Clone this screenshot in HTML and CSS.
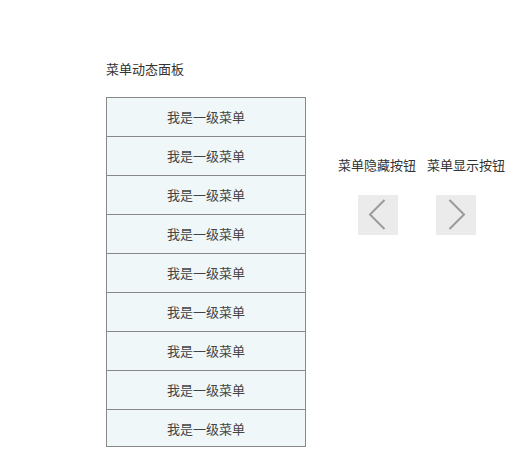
FILE: index.html
```html
<!DOCTYPE html>
<html lang="zh">
<head>
<meta charset="utf-8">
<link rel="stylesheet" href="styles.css">
</head>
<body>
<div class="page">
  <div class="panel">
    <div class="title">菜单动态面板</div>
    <ul class="menu">
      <li>我是一级菜单</li>
      <li>我是一级菜单</li>
      <li>我是一级菜单</li>
      <li>我是一级菜单</li>
      <li>我是一级菜单</li>
      <li>我是一级菜单</li>
      <li>我是一级菜单</li>
      <li>我是一级菜单</li>
      <li>我是一级菜单</li>
    </ul>
  </div>
  <div class="controls">
    <div class="labels">
      <span>菜单隐藏按钮</span>
      <span>菜单显示按钮</span>
    </div>
    <div class="buttons">
      <div class="btn"><svg width="40" height="40" viewBox="0 0 40 40"><path d="M26.5 5 L12 19.5 L26.5 34" fill="none" stroke="#9a9a9a" stroke-width="2"/></svg></div>
      <div class="btn"><svg width="40" height="40" viewBox="0 0 40 40"><path d="M13.5 5 L28 19.5 L13.5 34" fill="none" stroke="#9a9a9a" stroke-width="2"/></svg></div>
    </div>
  </div>
</div>
</body>
</html>
```
FILE: styles.css
```css
body {
  margin: 0;
  font-family: "Noto Sans CJK SC", "Noto Sans", sans-serif;
  font-size: 13px;
  color: #333;
  background: #fff;
}
.page {
  display: flex;
  align-items: flex-start;
  padding: 60px 0 0 106px;
}
.panel {
  width: 200px;
}
.title {
  height: 18px;
  line-height: 18px;
  margin-bottom: 19px;
}
.menu {
  list-style: none;
  margin: 0;
  padding: 0;
  box-sizing: border-box;
  height: 350px;
  overflow: hidden;
  border: 1px solid #898989;
  background: #eff7f9;
}
.menu li {
  height: 38px;
  line-height: 37px;
  text-align: center;
  color: #444;
}
.menu li + li {
  border-top: 1px solid #898989;
}
.controls {
  margin-left: 32px;
  margin-top: 96px;
}
.labels {
  display: flex;
  gap: 11px;
  height: 18px;
  line-height: 18px;
}
.buttons {
  display: flex;
  gap: 38px;
  margin-top: 21px;
  margin-left: 20px;
}
.btn {
  width: 40px;
  height: 40px;
  background: #ebebeb;
}
.btn svg {
  display: block;
}
```
